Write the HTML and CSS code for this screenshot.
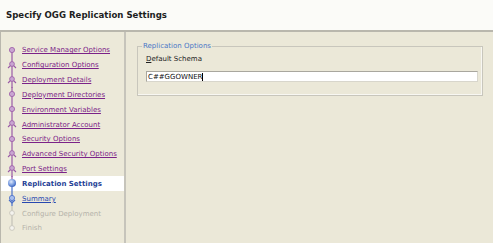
FILE: index.html
```html
<!DOCTYPE html>
<html lang="en">
<head>
<meta charset="UTF-8">
<title>Specify OGG Replication Settings</title>
<link rel="stylesheet" href="styles.css">
</head>
<body>

<div id="header">
    <h1>Specify OGG Replication Settings</h1>
</div>

<div id="main">
    <!-- Steps -->
    <div id="steps">
        <div class="step done first">
            <svg width="20" height="15"><line x1="12" y1="8" x2="12" y2="15" class="ln-done"/><circle cx="12" cy="7" r="2.6" class="dot-done"/></svg>
            <a href="#">Service Manager Options</a>
        </div>
        <div class="step done">
            <svg width="20" height="15"><line x1="12" y1="0" x2="12" y2="15" class="ln-done"/><path d="M8 10 L12 6 L16 10" class="arm-done"/><circle cx="12" cy="6" r="2.4" class="dot-done"/></svg>
            <a href="#">Configuration Options</a>
        </div>
        <div class="step done">
            <svg width="20" height="15"><line x1="12" y1="0" x2="12" y2="15" class="ln-done"/><path d="M8 10 L12 6 L16 10" class="arm-done"/><circle cx="12" cy="6" r="2.4" class="dot-done"/></svg>
            <a href="#">Deployment Details</a>
        </div>
        <div class="step done">
            <svg width="20" height="15"><line x1="12" y1="0" x2="12" y2="15" class="ln-done"/><circle cx="12" cy="7" r="2.6" class="dot-done"/></svg>
            <a href="#">Deployment Directories</a>
        </div>
        <div class="step done">
            <svg width="20" height="15"><line x1="12" y1="0" x2="12" y2="15" class="ln-done"/><circle cx="12" cy="7" r="2.6" class="dot-done"/></svg>
            <a href="#">Environment Variables</a>
        </div>
        <div class="step done">
            <svg width="20" height="15"><line x1="12" y1="0" x2="12" y2="15" class="ln-done"/><path d="M8 10 L12 6 L16 10" class="arm-done"/><circle cx="12" cy="6" r="2.4" class="dot-done"/></svg>
            <a href="#">Administrator Account</a>
        </div>
        <div class="step done">
            <svg width="20" height="15"><line x1="12" y1="0" x2="12" y2="15" class="ln-done"/><circle cx="12" cy="7" r="2.6" class="dot-done"/></svg>
            <a href="#">Security Options</a>
        </div>
        <div class="step done">
            <svg width="20" height="15"><line x1="12" y1="0" x2="12" y2="15" class="ln-done"/><path d="M8 10 L12 6 L16 10" class="arm-done"/><circle cx="12" cy="6" r="2.4" class="dot-done"/></svg>
            <a href="#">Advanced Security Options</a>
        </div>
        <div class="step done">
            <svg width="20" height="15"><line x1="12" y1="0" x2="12" y2="15" class="ln-done"/><path d="M8 10 L12 6 L16 10" class="arm-done"/><circle cx="12" cy="6" r="2.4" class="dot-done"/></svg>
            <a href="#">Port Settings</a>
        </div>
        <div class="step current">
            <svg width="20" height="15">
                <defs>
                    <radialGradient id="ball" cx="40%" cy="35%" r="65%">
                        <stop offset="0" stop-color="#dfe8fb"/>
                        <stop offset="0.6" stop-color="#7d9fe0"/>
                        <stop offset="1" stop-color="#3f66c0"/>
                    </radialGradient>
                </defs>
                <line x1="12" y1="0" x2="12" y2="4" class="ln-done"/>
                <line x1="12" y1="10" x2="12" y2="15" class="ln-next"/>
                <circle cx="12" cy="7" r="4" fill="url(#ball)"/>
            </svg>
            <span>Replication Settings</span>
        </div>
        <div class="step next">
            <svg width="20" height="15"><line x1="12" y1="0" x2="12" y2="15" class="ln-next"/><path d="M9 9 L12 12 L15 9" class="arm-next"/><circle cx="12" cy="7" r="2.6" class="dot-next"/></svg>
            <a href="#">Summary</a>
        </div>
        <div class="step todo">
            <svg width="20" height="15"><line x1="12" y1="0" x2="12" y2="15" class="ln-todo"/><circle cx="12" cy="7" r="2.4" class="dot-todo"/></svg>
            <span>Configure Deployment</span>
        </div>
        <div class="step todo">
            <svg width="20" height="15"><line x1="12" y1="0" x2="12" y2="7" class="ln-todo"/><circle cx="12" cy="7" r="2.4" class="dot-todo"/></svg>
            <span>Finish</span>
        </div>
    </div>

    <!-- Content -->
    <div id="content">
        <fieldset class="group">
            <legend>Replication Options</legend>
            <label for="schema"><u>D</u>efault Schema</label>
            <div class="field"><span class="value">C##GGOWNER</span><span class="caret"></span></div>
        </fieldset>
    </div>
</div>

</body>
</html>
```

FILE: styles.css
```css
html, body {
margin: 0;
padding: 0;
}
body {
width: 493px;
height: 243px;
overflow: hidden;
font-family: "DejaVu Sans", Verdana, sans-serif;
font-size: 7px;
background-color: #ebe8d8;
color: #222;
}
#header {
height: 32px;
background-color: #fbfbf8;
border-bottom: 2px solid #b9b7ad;
box-sizing: border-box;
display: flex;
align-items: center;
padding-left: 6px;
}
h1 {
margin: 0;
font-size: 8.6px;
font-weight: bold;
color: #1e1e1e;
}
#main {
display: flex;
height: 211px;
}
#steps {
width: 123px;
border-left: 1px solid #b9b7ad;
border-right: 2px solid #c6c4bb;
box-sizing: content-box;
padding-top: 11px;
background-color: #ece9d9;
}
.step {
height: 14.83px;
display: flex;
align-items: center;
font-size: 7px;
}
.step svg {
flex: none;
width: 20px;
height: 15px;
margin-left: -1px;
margin-right: 2px;
}
.step a {
color: #7b2288;
text-decoration: underline;
}
.step.current {
background-color: #fff;
}
.step.current span {
color: #1f3f96;
font-weight: bold;
}
.step.next a {
color: #2848b0;
}
.step.todo span {
color: #b5b3aa;
}
.ln-done {
stroke: #9a5aa6;
stroke-width: 1.2;
}
.ln-next {
stroke: #4a6fc8;
stroke-width: 1.2;
}
.ln-todo {
stroke: #c4c2b8;
stroke-width: 1.2;
}
.arm-done {
fill: none;
stroke: #9a5aa6;
stroke-width: 1.1;
}
.arm-next {
fill: none;
stroke: #4a6fc8;
stroke-width: 1.1;
}
.dot-done {
fill: #c9a6d2;
stroke: #9a5aa6;
stroke-width: 0.8;
}
.dot-next {
fill: #a9bfee;
stroke: #4a6fc8;
stroke-width: 0.8;
}
.dot-todo {
fill: #f4f3ee;
stroke: #c4c2b8;
stroke-width: 0.8;
}
#content {
flex: 1;
padding: 10px 10px 0 11px;
}
.group {
margin: 0;
border: 1px solid #c8c6bc;
box-shadow: inset -1px -1px 0 #f8f7f2;
padding: 2px 4px 12px 8px;
height: 54px;
box-sizing: border-box;
}
.group legend {
padding: 0 1px;
margin-left: -4px;
color: #4a76c6;
font-size: 7px;
}
.group label {
display: block;
margin-top: 3px;
color: #222;
}
.field {
margin-top: 8px;
height: 11px;
background-color: #fff;
border: 1px solid #a9a79e;
border-right-color: #d8d6cc;
border-bottom-color: #d8d6cc;
box-sizing: border-box;
display: flex;
align-items: center;
padding-left: 1px;
font-size: 7px;
color: #111;
}
.caret {
width: 1px;
height: 8px;
background-color: #000;
}
```
